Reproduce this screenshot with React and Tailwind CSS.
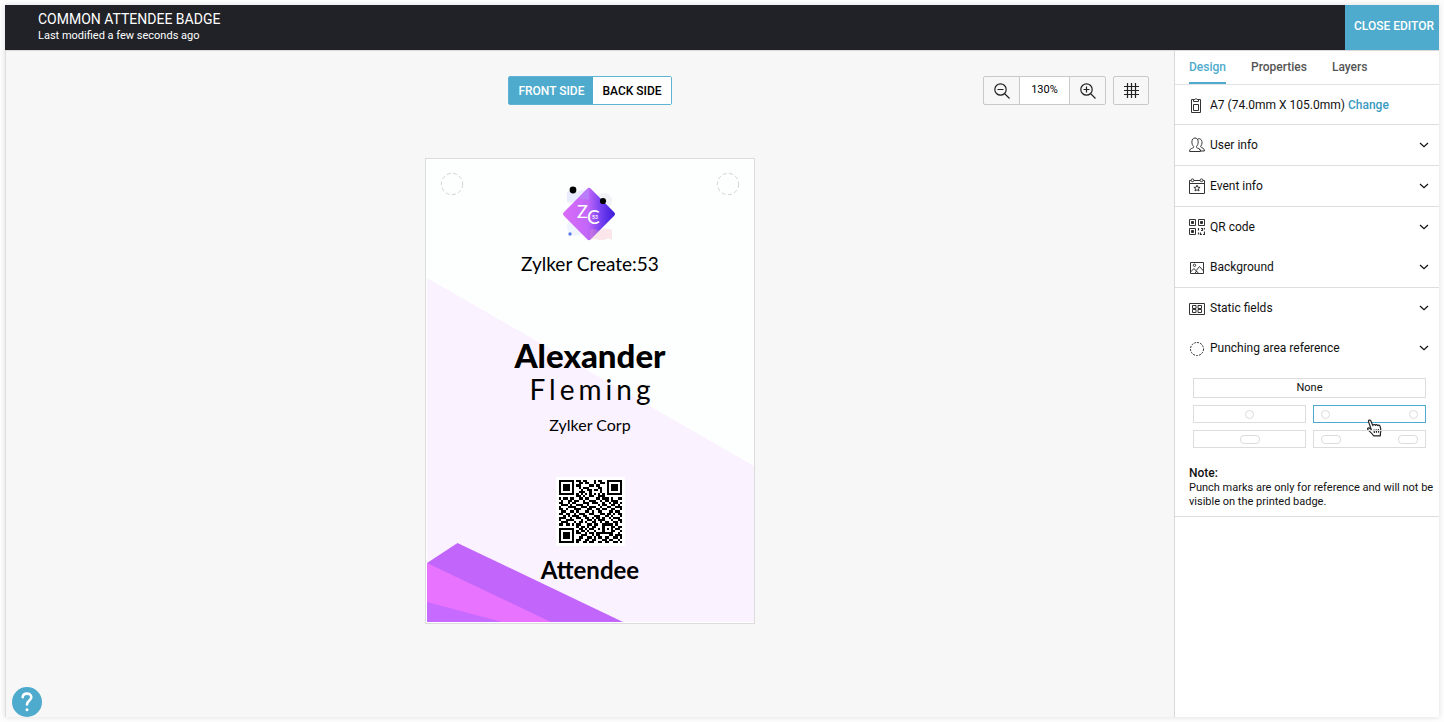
import React, { useState } from 'react';

const QR_ROWS = [
  '11111110110110001011001111111',
  '10000010011011001001101000001',
  '10111010110000110110001011101',
  '10111010010111000011001011101',
  '10111010001001101101001011101',
  '10000010011100100001001000001',
  '11111110101010101010101111111',
  '00000000110100110011100000000',
  '10110110011011000110111010011',
  '01001101100100111001011011100',
  '11001011000111011100100101101',
  '01110100111001000010110011010',
  '10001111001110111001001100111',
  '11010001110001100110110011001',
  '01100110100011010011000110110',
  '11011001011100110001101101011',
  '00101011100110001110011010001',
  '11100100110011010110100101110',
  '10011110001001101011100010011',
  '01110001011010011001011001101',
  '11011010110001101100111110100',
  '00000000101101011000100011011',
  '11111110011010110010101010110',
  '10000010101101001000100011001',
  '10111010110010110111111110010',
  '10111010001110010110000110111',
  '10111010011001101011011001101',
  '10000010110011011000110110010',
  '11111110100110110011011001101',
];

const QrCode = () => (
  <svg viewBox="0 0 29 29" className="block w-[63px] h-[63px]" shapeRendering="crispEdges" role="img" aria-label="QR code">
    {QR_ROWS.map((row, y) =>
      row.split('').map((cell, x) =>
        cell === '1' ? <rect key={`${x}-${y}`} x={x} y={y} width="1" height="1" /> : null
      )
    )}
  </svg>
);

const Chevron = () => (
  <svg width="10" height="6" viewBox="0 0 10 6" fill="none" stroke="#111" strokeWidth="1.2">
    <path d="M1 1l4 3.700L9 1" />
  </svg>
);

// Iconos del panel lateral
const Icon = ({ children }) => (
  <svg width="16" height="16" viewBox="0 0 16 16" fill="none" stroke="#333" strokeWidth="1" className="shrink-0">
    {children}
  </svg>
);

const BadgeIcon = () => (
  <Icon>
    <path d="M5.500 2.500h-3v13h9v-13h-3" />
    <path d="M4.500 4.500v-2h1.300a1.300 1.300 0 0 1 2.400 0h1.300v2z" />
    <path d="M4.500 7.500h5v6h-5z" />
  </Icon>
);

const UserIcon = () => (
  <Icon>
    <path d="M.6 14.500c0-2.300 1-2.800 3-3.400 1-.4 1.200-.8 1-1.600C3.400 8.300 2.900 6.700 2.900 4.800c0-2.300 1.200-3.800 3.100-3.800s3.200 1.500 3.200 3.800c0 1.900-.6 3.500-1.700 4.700-.2.800 0 1.200 1 1.600 2 .6 3 1.100 3 3.400z" />
    <path d="M8.600 2c2.600-1 4.400.8 4.400 3.600 0 1.500-.5 2.700-1.200 3.600-.2.800.1 1.100 1 1.500 1.700.6 2.600 1.200 2.600 3.300h-3.700" />
    <path d="M10 11.800l2 2.200" />
  </Icon>
);

const EventIcon = () => (
  <Icon>
    <path d="M2 2.500H.5v13h15v-13H14M5 2.500h6M.5 5.500h15" />
    <circle cx="3.500" cy="2.300" r="1.400" />
    <circle cx="12.500" cy="2.300" r="1.400" />
    <path d="M8 7.200l.9 2 2.200.2-1.700 1.400.6 2.100L8 11.800l-2 1.100.6-2.100-1.700-1.400 2.200-.2z" />
  </Icon>
);

const QrIcon = () => (
  <Icon>
    <path d="M.5.5h6v6h-6zM9.500.5h6v6h-6zM.5 9.500h6v6h-6z" />
    <path d="M2.500 2.500h2v2h-2zM11.500 2.500h2v2h-2zM2.500 11.500h2v2h-2z" fill="#222" />
    <path d="M9.500 9v2.500M9.500 13.500v2M12 9.500h1.500v2H12M15.500 9v1.500M11.500 13.500v2h1.500M15.500 12.500v3H14" strokeWidth="1.200" />
  </Icon>
);

const ImageIcon = () => (
  <Icon>
    <path d="M1.500 3.500h13v11h-13z" />
    <circle cx="5.500" cy="6.300" r="1.200" />
    <path d="M1.500 13l3.500-3.500 2 2.300 3.500-4.300 4 4.500M6 14.500l1.500-2.500 2 2.500" />
  </Icon>
);

const StaticIcon = () => (
  <Icon>
    <path d="M.5 3.500h15v11H.5z" />
    <path d="M3.500 5.500h3.500v3H3.500zM9 5.500h3.500v3H9zM3.500 9.500h3.500v3H3.500zM9 9.500h3.500v3H9z" />
  </Icon>
);

const PunchIcon = () => (
  <Icon>
    <circle cx="8" cy="9" r="6.500" strokeDasharray="2 1" />
  </Icon>
);

const sections = [
  { name: 'User info', icon: UserIcon, line: true },
  { name: 'Event info', icon: EventIcon, line: true },
  { name: 'QR code', icon: QrIcon, line: false },
  { name: 'Background', icon: ImageIcon, line: true },
  { name: 'Static fields', icon: StaticIcon, line: false },
  { name: 'Punching area reference', icon: PunchIcon, line: false },
];

const punchOptions = [
  { id: 'circle', label: 'One round hole', marks: 1, round: true },
  { id: 'circles', label: 'Two round holes', marks: 2, round: true },
  { id: 'slot', label: 'One slot', marks: 1, round: false },
  { id: 'slots', label: 'Two slots', marks: 2, round: false },
];

const HandCursor = () => (
  <svg width="17" height="18" viewBox="0 0 17 18" className="absolute left-[52px] top-[13px] pointer-events-none" fill="#fff" stroke="#222" strokeWidth="1.200" strokeLinejoin="round">
    <path d="M4.600 8.800L2.600 2.900C2 1 4.200.3 4.900 2l1.900 4.600c.2-1.300 2-1.500 2.500-.2.400-1.100 2-1 2.400.2.500-.9 2-.7 2.300.5.800 2.300 1.200 4.600.5 6.500l-.2 3.200H7.600c-1-2-3.200-3.800-5.300-5.700C.9 9.800 2 8.300 3.300 9l2 1.400z" />
    <path d="M8 10.500l.4 3.500M10.200 10.300l.3 3.500M12.400 10.100l.2 3.500" />
  </svg>
);

const PunchHole = () => (
  <svg width="24" height="24" viewBox="0 0 24 24" fill="none" stroke="#d3d3d3">
    <circle cx="12" cy="12" r="10.700" strokeDasharray="4 2.400" />
  </svg>
);

const Logo = () => (
  <svg width="60" height="60" viewBox="0 0 60 60" className="block">
    <defs>
      <linearGradient id="logoFill" x1="0" y1="0" x2="1" y2="0">
        <stop offset="0" stopColor="#d96cf8" />
        <stop offset=".48" stopColor="#c266f8" />
        <stop offset=".75" stopColor="#6f3df0" />
        <stop offset="1" stopColor="#3d1bd8" />
      </linearGradient>
    </defs>
    <path d="M8 8c4-3 6 2 10 0s6-3 12-1v10c-4 2-6-2-11 0s-7 2-11 1z" fill="#e9ebfe" />
    <circle cx="45" cy="17" r="8" fill="#f1f2f5" />
    <circle cx="17" cy="43" r="9" fill="#f0f5fd" />
    <path d="M28.200 4.800a2.500 2.500 0 0 1 3.600 0l23.400 23.400a2.500 2.500 0 0 1 0 3.600L31.800 55.200a2.500 2.500 0 0 1-3.600 0L4.800 31.800a2.500 2.500 0 0 1 0-3.600z" fill="url(#logoFill)" />
    <path d="M30 4v12c-4-2-6 1-10-2z" fill="#a9a0fb" opacity=".4" />
    <path d="M31 46c4-3 7 2 11 0s6-2 11 0v10c-4-3-6 0-11 0s-6-3-11 0z" fill="#f7a9b8" opacity=".28" />
    <circle cx="14" cy="6" r="3.400" />
    <circle cx="44" cy="17" r="3.100" />
    <circle cx="11" cy="50" r="1.700" fill="#5b7bea" />
    <text x="18" y="34" fontSize="18" fill="#fff" fontFamily="Lato, sans-serif">Z</text>
    <text x="28" y="40" fontSize="19" fill="#fff" fontFamily="Lato, sans-serif">C</text>
    <text x="33" y="35" fontSize="5" fontWeight="700" fill="#fff" fontFamily="Lato, sans-serif">53</text>
  </svg>
);

const Badge = () => (
  <div className="relative w-[330px] h-[466px] bg-white border border-[#dcdcdc] text-black font-['Lato',sans-serif] text-center">
    <svg viewBox="0 0 328 464" className="absolute inset-0 w-full h-full">
      <rect x="1" y="1" width="326" height="462" fill="#fdfefe" />
      <path d="M1 119L328 307V463H1z" fill="#fbf2ff" />
      <path d="M1 404L31.500 384L197 463H1z" fill="#c266fb" />
      <path d="M1 404L125 463H1z" fill="#e873ff" />
      <path d="M1 443L76 463H1z" fill="#c76aff" />
    </svg>
    <div className="relative flex justify-between px-[14px] pt-[13px] h-[25px]">
      <PunchHole />
      <PunchHole />
    </div>
    <div className="relative flex flex-col items-center">
      <div className="pr-[2px]"><Logo /></div>
      <p className="mt-2 text-[19px] leading-6">Zylker Create:53</p>
      <p className="mt-[61px] text-[33px] leading-9 font-black">Alexander</p>
      <p className="text-[28px] leading-8 tracking-[4px] pl-1">Fleming</p>
      <p className="mt-2 text-[16px] leading-6">Zylker Corp</p>
      <div className="mt-10 p-[3px] bg-white"><QrCode /></div>
      <p className="mt-2 text-[24px] leading-8 font-bold">Attendee</p>
    </div>
  </div>
);

const App = () => {
  const [side, setSide] = useState('front');
  const [tab, setTab] = useState('Design');
  const [punch, setPunch] = useState('circles');

  return (
    <div className="min-h-screen flex flex-col p-[5px] bg-[#fdfdfd] font-['Roboto',sans-serif]">
      <div className="flex-1 flex flex-col shadow-[0_0_5px_#dddddd]">
        <header className="flex justify-between h-[45px] bg-[#212227] text-white">
          <div className="pl-[33px] pt-[5px]">
            <h1 className="text-[14px] leading-[18px]">COMMON ATTENDEE BADGE</h1>
            <p className="text-[11px] leading-4">Last modified a few seconds ago</p>
          </div>
          <button className="pl-[9px] pr-[5px] pb-1 bg-[#4eabcd] text-[12px] font-medium whitespace-nowrap">CLOSE EDITOR</button>
        </header>

        <div className="flex-1 flex border-t border-[#d9d9d9]">
          <main className="relative flex-1 bg-[#f7f7f7] border-l border-[#dedede]">
            <div className="grid grid-cols-[1fr_auto_1fr] pt-[25px] px-[25px]">
              <div className="col-start-2 flex h-[29px] border border-[#5fb4d3] rounded-xs text-[12px] font-medium">
                <button
                  onClick={() => setSide('front')}
                  className={`px-[9px] ${side === 'front' ? 'bg-[#4eabcd] text-white' : 'bg-white text-black'}`}
                >
                  FRONT SIDE
                </button>
                <button
                  onClick={() => setSide('back')}
                  className={`px-[9px] ${side === 'back' ? 'bg-[#4eabcd] text-white' : 'bg-white text-black'}`}
                >
                  BACK SIDE
                </button>
              </div>
              <div className="flex justify-end gap-[7px]">
                <div className="flex h-[29px] border border-[#c9c9c9] rounded-xs">
                  <button aria-label="Zoom out" className="w-[35px] flex items-center justify-center">
                    <svg width="16" height="16" viewBox="0 0 16 16" fill="none" stroke="#222" strokeWidth="1.200">
                      <circle cx="6.500" cy="6.500" r="5.700" />
                      <path d="M10.500 10.500l5 5M3.500 6.500h6" />
                    </svg>
                  </button>
                  <span className="w-[51px] flex items-center justify-center bg-white border-x border-[#c9c9c9] text-[11px]">130%</span>
                  <button aria-label="Zoom in" className="w-[35px] flex items-center justify-center">
                    <svg width="16" height="16" viewBox="0 0 16 16" fill="none" stroke="#222" strokeWidth="1.200">
                      <circle cx="6.500" cy="6.500" r="5.700" />
                      <path d="M10.500 10.500l5 5M3.500 6.500h6M6.500 3.500v6" />
                    </svg>
                  </button>
                </div>
                <button aria-label="Grid" className="w-9 h-[29px] border border-[#c9c9c9] rounded-xs flex items-center justify-center">
                  <svg width="15" height="15" viewBox="0 0 15 15" stroke="#222" strokeWidth="1.200">
                    <path d="M3.500 0v15M7.500 0v15M11.500 0v15M0 3.500h15M0 7.500h15M0 11.500h15" />
                  </svg>
                </button>
              </div>
            </div>

            <div className="flex justify-center pt-[53px]">
              <Badge />
            </div>

            <button aria-label="Help" className="absolute left-[6px] bottom-0 w-[30px] h-[30px] rounded-full bg-[#4eabcd] flex items-center justify-center">
              <svg width="12" height="20" viewBox="0 0 12 20" fill="none" stroke="#fff" strokeWidth="2.600" strokeLinecap="round">
                <path d="M1.700 5.200C2 .4 10.300.4 10.300 5.300c0 3.200-4.300 3.200-4.300 7.200" />
                <circle cx="6" cy="17.800" r="1.500" fill="#fff" stroke="none" />
              </svg>
            </button>
          </main>

          <aside className="w-[265px] shrink-0 bg-white border-l border-[#d9d9d9] text-[#111]">
            <nav className="flex gap-[25px] h-[34px] pl-[14px] border-b border-[#e2e2e2]">
              {['Design', 'Properties', 'Layers'].map((name) => (
                <button
                  key={name}
                  onClick={() => setTab(name)}
                  className={`text-[12px] font-medium border-b-2 ${tab === name ? 'text-[#4eabcd] border-[#4eabcd]' : 'text-[#555] border-transparent'}`}
                >
                  {name}
                </button>
              ))}
            </nav>

            <div className="flex items-center h-[40px] pl-[14px] border-b border-[#dedede] text-[12px]">
              <BadgeIcon />
              <span className="ml-[5px]">A7 (74.0mm X 105.0mm)</span>
              <a href="#change" className="ml-[3px] font-medium text-[#3b9abf]">Change</a>
            </div>

            {sections.map(({ name, icon: SectionIcon, line }) => (
              <button
                key={name}
                className={`flex items-center w-full pl-[14px] pr-[10px] text-[12px] text-left ${line ? 'h-[41px] border-b border-[#dedede]' : 'h-[40px]'}`}
              >
                <SectionIcon />
                <span className="ml-[5px] flex-1">{name}</span>
                <Chevron />
              </button>
            ))}

            <div className="pl-[14px] pt-[10px] pb-[7px] border-b border-[#dedede]">
              <div className="grid grid-cols-2 gap-[7px] ml-1 mr-[13px]">
                <button
                  onClick={() => setPunch('none')}
                  className={`col-span-2 h-5 border text-[11px] ${punch === 'none' ? 'border-[#4eabcd]' : 'border-[#dcdcdc]'}`}
                >
                  None
                </button>
                {punchOptions.map((opt) => (
                  <button
                    key={opt.id}
                    aria-label={opt.label}
                    onClick={() => setPunch(opt.id)}
                    className={`relative flex items-center h-[18px] px-[7px] border ${opt.marks === 2 ? 'justify-between' : 'justify-center'} ${punch === opt.id ? 'border-[#4eabcd]' : 'border-[#dcdcdc]'}`}
                  >
                    {Array.from({ length: opt.marks }, (_, i) => (
                      <span key={i} className={`border border-[#dcdcdc] ${opt.round ? 'w-[9px] h-[9px] rounded-full' : 'w-5 h-[9px] rounded'}`} />
                    ))}
                    {opt.id === 'circles' && <HandCursor />}
                  </button>
                ))}
              </div>
              <p className="mt-[17px] text-[12px] leading-4 font-medium">Note:</p>
              <p className="text-[11px] leading-[14px]">
                Punch marks are only for reference and will not be visible on the printed badge.
              </p>
            </div>
          </aside>
        </div>
      </div>
    </div>
  );
};

export default App;
